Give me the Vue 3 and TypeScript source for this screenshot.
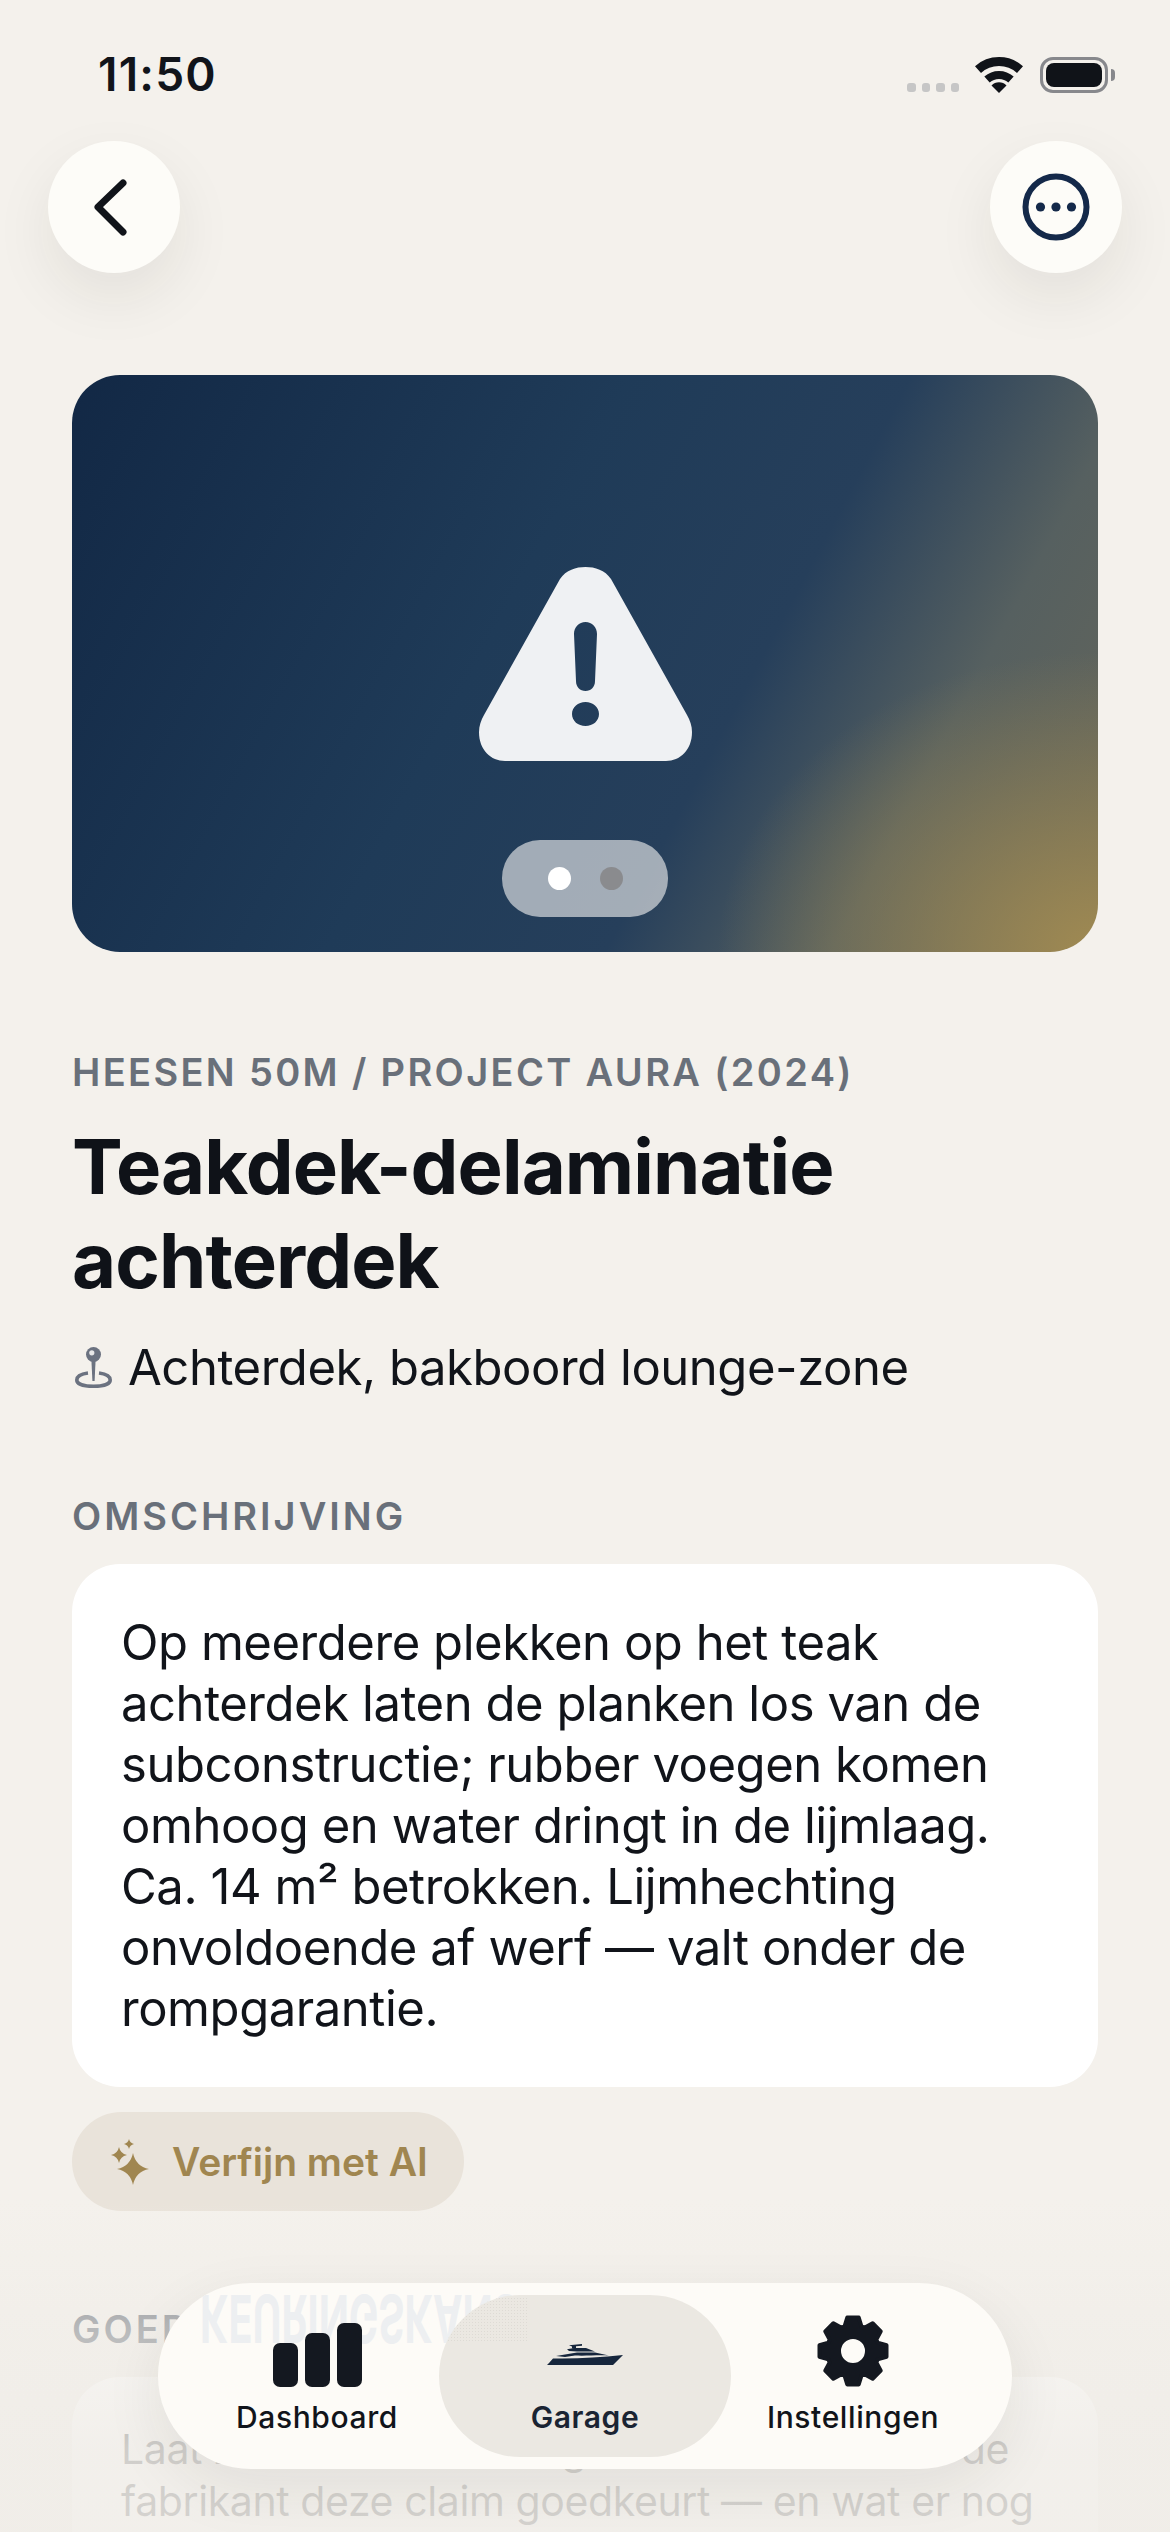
<script setup lang="ts">
type NavItem = { label: string; icon: 'bars' | 'yacht' | 'gear'; active?: boolean }

const navItems: NavItem[] = [
  { label: 'Dashboard', icon: 'bars' },
  { label: 'Garage', icon: 'yacht', active: true },
  { label: 'Instellingen', icon: 'gear' }
]

// four-point sparkle
function star(cx: number, cy: number, r: number): string {
  const k = r * 0.17
  return `M${cx} ${cy - r}Q${cx + k} ${cy - k} ${cx + r} ${cy}Q${cx + k} ${cy + k} ${cx} ${cy + r}Q${cx - k} ${cy + k} ${cx - r} ${cy}Q${cx - k} ${cy - k} ${cx} ${cy - r}Z`
}

const sparkles = [star(24, 31, 16), star(10, 17, 8), star(20, 6, 5)].join('')

// gear with 8 teeth, centred on 36,36
function gear(): string {
  const pts: string[] = []
  const outer = 34
  const root = 26
  for (let i = 0; i < 8; i++) {
    const a = (i * Math.PI) / 4 - Math.PI / 2
    const spread = [[root, -0.33], [outer, -0.17], [outer, 0.17], [root, 0.33]]
    for (const [r, d] of spread) {
      pts.push(`${(36 + r * Math.cos(a + d)).toFixed(2)} ${(36 + r * Math.sin(a + d)).toFixed(2)}`)
    }
  }
  return `M${pts.join('L')}Z`
}

const gearPath = gear()
</script>

<template>
  <div class="screen">
    <div class="status">
      <span class="time">11:50</span>
      <div class="status-icons">
        <div class="signal"><i></i><i></i><i></i><i></i></div>
        <svg class="wifi" width="48" height="36" viewBox="0 0 48 36">
          <path d="M3 12.6A31.5 31.5 0 0 1 45 12.6" fill="none" stroke="#101318" stroke-width="9" />
          <path d="M12 22.6A18 18 0 0 1 36 22.6" fill="none" stroke="#101318" stroke-width="8" />
          <path d="M24 36L16.5 28.5A10.5 10.5 0 0 1 31.5 28.5Z" fill="#101318" />
        </svg>
        <div class="battery"><span></span></div>
      </div>
    </div>

    <div class="topbar">
      <button class="round-btn">
        <svg width="48" height="64" viewBox="0 0 48 64">
          <path d="M33 8L8 32L33 57" fill="none" stroke="#11141a" stroke-width="7" stroke-linecap="round" stroke-linejoin="round" />
        </svg>
      </button>
      <button class="round-btn">
        <svg width="68" height="68" viewBox="0 0 68 68">
          <circle cx="34" cy="34" r="30.5" fill="none" stroke="#14294a" stroke-width="6" />
          <circle cx="18.5" cy="34" r="4.6" fill="#14294a" />
          <circle cx="34" cy="34" r="4.6" fill="#14294a" />
          <circle cx="49.5" cy="34" r="4.6" fill="#14294a" />
        </svg>
      </button>
    </div>

    <div class="hero">
      <svg class="warning" width="213" height="194" viewBox="0 0 213 194">
        <path
          fill="#eff1f3"
          fill-rule="evenodd"
          d="M81 12C87 3 97 0 106.5 0C116 0 126 3 132 12L208 148C211 153 213 159 213 165C213 183 201 194 187 194L26 194C12 194 0 183 0 165C0 159 2 153 5 148ZM106.5 55C113 55 118 60 118 67L116 114C116 120 112 124 106.5 124C101 124 97 120 97 114L95 67C95 60 100 55 106.5 55ZM106.5 135C99 135 93 140 93 147C93 154 99 159 106.5 159C114 159 120 154 120 147C120 140 114 135 106.5 135Z"
        />
      </svg>
      <div class="pager"><i class="on"></i><i></i></div>
    </div>

    <div class="eyebrow">HEESEN 50M / PROJECT AURA (2024)</div>
    <h1 class="title">Teakdek-delaminatie achterdek</h1>
    <div class="location">
      <svg width="37" height="41" viewBox="0 0 37 41">
        <path d="M13 26C5 27 1.8 30 1.8 33C1.8 37 9 39.2 18.5 39.2C28 39.2 35.2 37 35.2 33C35.2 30 32 27 24 26" fill="none" stroke="#6b7280" stroke-width="3.6" />
        <path d="M16.4 13L20.6 13L19.6 34L17.4 34Z" fill="#6b7280" />
        <circle cx="18.5" cy="7.5" r="7.5" fill="#6b7280" />
        <circle cx="16.8" cy="5.8" r="2.6" fill="#e8e8e8" />
      </svg>
      <span>Achterdek, bakboord lounge-zone</span>
    </div>

    <div class="label">OMSCHRIJVING</div>
    <div class="card">
      Op meerdere plekken op het teak achterdek laten de planken los van de subconstructie; rubber voegen komen omhoog en water dringt in de lijmlaag. Ca. 14 m² betrokken. Lijmhechting onvoldoende af werf — valt onder de rompgarantie.
    </div>
    <button class="refine">
      <svg width="40" height="48" viewBox="0 0 40 48"><path :d="sparkles" fill="#a08650" /></svg>
      <span>Verfijn met AI</span>
    </button>

    <div class="label second">GOEDKEURINGSKANS</div>
    <div class="card small">
      Laat zien hoe zeker de garantie is en of nou de fabrikant deze claim goedkeurt — en wat er nog ontbreekt.
    </div>

    <div class="fade"></div>

    <nav class="tabbar">
      <div class="ghost">KEURINGSKANS</div>
      <div v-for="item in navItems" :key="item.label" class="tab" :class="{ active: item.active }">
        <div class="tab-icon">
          <div v-if="item.icon === 'bars'" class="bars"><i></i><i></i><i></i></div>
          <svg v-else-if="item.icon === 'yacht'" width="76" height="21" viewBox="0 0 76 21">
            <path fill="#16263c" d="M6 14.5C30 15 52 13.5 76 11L66 21L0 21L2 19Z" />
            <path fill="#16263c" d="M9 12L24 9.5L30 8.5L48 8.5L62 11.5C50 11 38 12 28 11.5L18 13Z" />
            <path fill="#16263c" d="M20 5.2L27 4L39 4L48 7.5L30 7.5L22 7Z" />
            <path fill="#16263c" d="M22 1.2L35 0L35 1.8L29 2.2L29 4.5L25 4.5L25 2.4Z" />
          </svg>
          <svg v-else width="72" height="72" viewBox="0 0 72 72">
            <path :d="gearPath + 'M36 24A12 12 0 1 0 36 48A12 12 0 1 0 36 24Z'" fill="#141820" fill-rule="evenodd" />
            <path :d="gearPath" fill="none" stroke="#141820" stroke-width="4" stroke-linejoin="round" />
          </svg>
        </div>
        <span>{{ item.label }}</span>
      </div>
    </nav>
  </div>
</template>

<style>
html, body {
  margin: 0;
  background: #f4f1ec;
}
</style>

<style scoped>
.screen {
  position: relative;
  width: 1170px;
  height: 2532px;
  overflow: hidden;
  background: #f4f1ec;
  font-family: Inter, "Liberation Sans", sans-serif;
  color: #11141a;
}

.status {
  display: flex;
  align-items: center;
  justify-content: space-between;
  height: 37px;
  padding: 56px 62px 0 98px;
}

.time {
  font-size: 46px;
  font-weight: 600;
  line-height: 37px;
  letter-spacing: 1.2px;
}

.status-icons {
  display: flex;
  align-items: flex-end;
}

.signal {
  display: flex;
  gap: 6px;
  margin-right: 16px;
  padding-bottom: 1px;
}

.signal i {
  width: 8.5px;
  height: 9px;
  border-radius: 3px;
  background: #c6c6c6;
}

.wifi {
  margin-right: 17px;
}

.battery {
  position: relative;
  box-sizing: border-box;
  width: 68px;
  height: 36px;
  padding: 3px;
  border: 3px solid #87888c;
  border-radius: 13px;
}

.battery::after {
  content: '';
  position: absolute;
  top: 9px;
  right: -10px;
  width: 4px;
  height: 12px;
  border-radius: 0 4px 4px 0;
  background: #87888c;
}

.battery span {
  display: block;
  height: 100%;
  border-radius: 8px;
  background: #101318;
}

.topbar {
  display: flex;
  justify-content: space-between;
  padding: 48px 48px 0;
}

.round-btn {
  display: flex;
  align-items: center;
  justify-content: center;
  width: 132px;
  height: 132px;
  padding: 0;
  border: 0;
  border-radius: 50%;
  background: #fdfcf8;
  box-shadow: 0 24px 60px rgba(40, 35, 25, 0.08);
}

.hero {
  display: flex;
  flex-direction: column;
  align-items: center;
  box-sizing: border-box;
  height: 577px;
  margin: 102px 72px 0;
  padding-top: 192px;
  border-radius: 48px;
  background:
    radial-gradient(ellipse 380px 300px at 100% 100%, #a08a52 0%, rgba(160, 138, 82, 0) 100%),
    linear-gradient(118deg, #122845 0%, #1f3b58 42%, #263f5b 63%, #566060 80%, #666659 100%);
}

.pager {
  display: flex;
  align-items: center;
  justify-content: center;
  gap: 29px;
  width: 166px;
  height: 77px;
  margin-top: 79px;
  border-radius: 38px;
  background: rgba(240, 240, 240, 0.62);
}

.pager i {
  width: 23px;
  height: 23px;
  border-radius: 50%;
  background: #8a8b8e;
}

.pager i.on {
  background: #fff;
}

.eyebrow,
.label {
  margin: 0 72px;
  font-size: 38px;
  font-weight: 600;
  line-height: 46px;
  color: #69707a;
}

.eyebrow {
  margin-top: 97px;
  letter-spacing: 2.35px;
}

.title {
  margin: 24px 72px 0;
  font-size: 76px;
  font-weight: 700;
  line-height: 94px;
  letter-spacing: -0.9px;
  color: #0f1218;
}

.location {
  display: flex;
  align-items: center;
  gap: 16px;
  margin: 30px 72px 0 75px;
  font-size: 49px;
  line-height: 61px;
  letter-spacing: -0.45px;
}

.label {
  margin-top: 95px;
  letter-spacing: 3px;
}

.card {
  margin: 25px 72px 0;
  padding: 48px 49px;
  border-radius: 48px;
  background: #fff;
  font-size: 49px;
  line-height: 61px;
  letter-spacing: -0.45px;
}

.card.small {
  padding-top: 46px;
  font-size: 41px;
  line-height: 52px;
  letter-spacing: -0.4px;
}

.refine {
  display: flex;
  align-items: center;
  gap: 23px;
  box-sizing: border-box;
  height: 99px;
  margin: 25px 0 0 72px;
  padding: 0 36px 0 37px;
  border: 0;
  border-radius: 50px;
  background: #e9e3da;
  color: #a08650;
  font-family: inherit;
  font-size: 39px;
  font-weight: 600;
}

.fade {
  position: absolute;
  left: 0;
  right: 0;
  top: 2200px;
  bottom: 0;
  background: linear-gradient(180deg, rgba(240, 237, 232, 0) 0%, rgba(240, 237, 232, 0.6) 40%, rgba(240, 237, 232, 0.86) 75%, rgba(240, 237, 232, 0.88) 100%);
}

.tabbar {
  position: absolute;
  left: 158px;
  top: 2283px;
  display: grid;
  grid-template-columns: repeat(3, 268px);
  box-sizing: border-box;
  width: 854px;
  height: 186px;
  padding: 12px 25px;
  overflow: hidden;
  border-radius: 93px;
  background: #fdfbf7;
  box-shadow: 0 20px 60px rgba(40, 35, 25, 0.08);
}

.ghost {
  position: absolute;
  left: 42px;
  top: 6px;
  font-size: 66px;
  font-weight: 700;
  line-height: 60px;
  white-space: nowrap;
  color: #edeff1;
  transform: scale(0.6, -1);
  transform-origin: 0 50%;
}

.tab {
  position: relative;
  display: flex;
  flex-direction: column;
  align-items: center;
  font-size: 30px;
  font-weight: 500;
  line-height: 36px;
  letter-spacing: 0.6px;
  color: #11141a;
}

.tab.active {
  margin: 0 -12px;
  overflow: hidden;
  border-radius: 81px;
  background: #ebe8e2;
  font-weight: 600;
  color: #1a2433;
}

/* dithered patch where the reflection shows through the pill */
.tab.active::before {
  content: '';
  position: absolute;
  left: 8px;
  top: 2px;
  width: 80px;
  height: 46px;
  background: radial-gradient(circle, #dedbd5 0.8px, transparent 1px) 0 0 / 3px 3px;
}

.tab-icon {
  position: relative;
  display: flex;
  align-items: flex-end;
  justify-content: center;
  height: 92px;
  margin-bottom: 12px;
}

.tab.active .tab-icon {
  padding-bottom: 22px;
  height: 70px;
}

.bars {
  display: flex;
  align-items: flex-end;
  gap: 7px;
}

.bars i {
  width: 25px;
  border-radius: 7px;
  background: #141820;
}

.bars i:nth-child(1) { height: 44px; }
.bars i:nth-child(2) { height: 54px; }
.bars i:nth-child(3) { height: 64px; }
</style>
